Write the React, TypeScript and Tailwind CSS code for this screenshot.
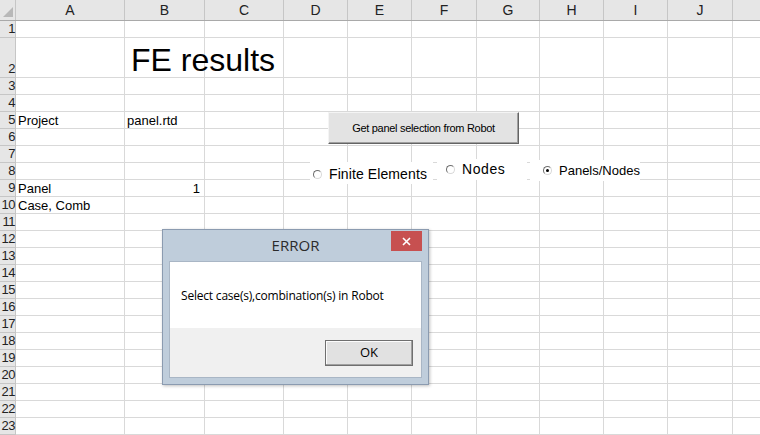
import React from 'react';

// Column widths (px) for the sheet: row-number gutter, A..J, then a partial K
const COLS = [
  { key: '', w: 16 },
  { key: 'A', w: 109 },
  { key: 'B', w: 80 },
  { key: 'C', w: 79 },
  { key: 'D', w: 64 },
  { key: 'E', w: 64 },
  { key: 'F', w: 65 },
  { key: 'G', w: 63 },
  { key: 'H', w: 64 },
  { key: 'I', w: 64 },
  { key: 'J', w: 65 },
  { key: '', w: 40 },
];

const ROW_COUNT = 23;

// Cell contents keyed by "row:col"
const CELLS: Record<string, { text: string; align?: 'right' }> = {
  '5:A': { text: 'Project' },
  '5:B': { text: 'panel.rtd' },
  '9:A': { text: 'Panel' },
  '9:B': { text: '1', align: 'right' },
  '10:A': { text: 'Case, Comb' },
};

const rowHeight = (r: number) => (r === 2 ? 40 : 17);

const CornerCell: React.FC = () => (
  <div className="relative h-full border-r border-[#c6c6c6] bg-[#e6e6e6]">
    <svg className="absolute bottom-[3px] right-[2px]" width="10" height="10" viewBox="0 0 10 10">
      <polygon points="10,0 10,10 0,10" fill="#b8b8b8" />
    </svg>
  </div>
);

const HeaderRow: React.FC = () => (
  <div className="flex h-[21px] border-b border-[#a9a9a9] bg-[#e6e6e6]">
    {COLS.map((c, i) =>
      i === 0 ? (
        <div key={i} style={{ width: c.w }} className="shrink-0">
          <CornerCell />
        </div>
      ) : (
        <div
          key={i}
          style={{ width: c.w }}
          className="flex shrink-0 items-center justify-center border-r border-[#c6c6c6] text-[14px] text-[#222]"
        >
          {c.key}
        </div>
      )
    )}
  </div>
);

const SheetRow: React.FC<{ r: number }> = ({ r }) => (
  <div className="flex" style={{ height: rowHeight(r) }}>
    {COLS.map((c, i) => {
      if (i === 0) {
        return (
          <div
            key={i}
            style={{ width: c.w }}
            className="flex shrink-0 items-end justify-end whitespace-nowrap border-b border-r border-[#c6c6c6] bg-[#e6e6e6] text-[13px] leading-[16px] tracking-[-0.5px] text-[#222]"
          >
            {r}
          </div>
        );
      }
      const cell = CELLS[`${r}:${c.key}`];
      return (
        <div
          key={i}
          style={{ width: c.w }}
          className={`flex shrink-0 items-end whitespace-nowrap border-b border-r border-[#d9d9d9] px-[2px] text-[13px] leading-[15px] text-black ${
            cell?.align === 'right' ? 'justify-end pr-[4px]' : ''
          }`}
        >
          {cell?.text}
        </div>
      );
    })}
  </div>
);

const Radio: React.FC<{ label: string; checked?: boolean; className: string; textClass?: string }> = ({
  label,
  checked,
  className,
  textClass = 'text-[14px]',
}) => (
  <div className={`absolute flex items-center bg-white ${className}`}>
    <span className="relative mr-[7px] inline-block h-[9px] w-[9px] shrink-0 rounded-full border border-t-[#6e6e6e] border-l-[#6e6e6e] border-r-[#d8d8d8] border-b-[#d8d8d8] bg-white">
      {checked && <span className="absolute left-[2px] top-[2px] h-[3px] w-[3px] rounded-full bg-black" />}
    </span>
    <span className={`text-black ${textClass}`}>{label}</span>
  </div>
);

const ErrorDialog: React.FC = () => (
  <div className="absolute left-[162px] top-[229px] flex h-[156px] w-[267px] flex-col border border-[#8b9bb0] bg-[#bfcddb] shadow-[1px_1px_3px_rgba(0,0,0,0.25)]">
    <div className="relative flex h-[31px] items-center justify-center">
      <span className="text-[15px] text-[#2b2b2b]" style={{ fontFamily: '"Open Sans", "Liberation Sans", sans-serif' }}>
        ERROR
      </span>
      <div className="absolute right-[6px] top-[1px] flex h-[20px] w-[31px] items-center justify-center bg-[#c75050]">
        <svg width="9" height="9" viewBox="0 0 9 9">
          <path d="M1 1 L8 8 M8 1 L1 8" stroke="#fff" strokeWidth="1.6" />
        </svg>
      </div>
    </div>
    <div className="mx-[6px] flex flex-1 flex-col border border-[#a9b6c5]">
      <div className="flex h-[66px] items-center bg-white pl-[11px] pt-[2px]">
        <span
          className="text-[12px] tracking-[-0.2px] text-black"
          style={{ fontFamily: '"Open Sans", "Liberation Sans", sans-serif' }}
        >
          Select case(s),combination(s) in Robot
        </span>
      </div>
      <div className="flex flex-1 items-start justify-end bg-[#f0f0f0] pr-[8px] pt-[12px]">
        <div className="flex h-[26px] w-[88px] items-center justify-center border border-[#6f6f6f] bg-[#e1e1e1] shadow-[inset_-1px_-1px_0_#a0a0a0,inset_1px_1px_0_#fcfcfc]">
          <span className="text-[13px] text-black" style={{ fontFamily: '"Open Sans", "Liberation Sans", sans-serif' }}>
            OK
          </span>
        </div>
      </div>
    </div>
    <div className="h-[6px]" />
  </div>
);

export default function App() {
  const rows = Array.from({ length: ROW_COUNT }, (_, i) => i + 1);
  return (
    <div
      className="relative h-[435px] w-[760px] overflow-hidden bg-white"
      style={{ fontFamily: '"Liberation Sans", Arial, sans-serif' }}
    >
      <HeaderRow />
      {rows.map((r) => (
        <SheetRow key={r} r={r} />
      ))}

      {/* sheet title in B2, spilling into C */}
      <div className="absolute left-[131px] top-[42px] whitespace-nowrap text-[32px] leading-[36px] text-black">
        FE results
      </div>

      {/* form controls placed on the sheet */}
      <div className="absolute left-[328px] top-[112px] flex h-[32px] w-[191px] items-center justify-center border border-t-[#f4f4f4] border-l-[#f4f4f4] border-b-[#646464] border-r-[#646464] bg-[#e3e3e3] shadow-[inset_-1px_-1px_0_#a0a0a0]">
        <span className="text-[11px] tracking-[-0.3px] text-black">Get panel selection from Robot</span>
      </div>

      <Radio label="Finite Elements" className="left-[310px] top-[162px] h-[22px] w-[123px] pl-[3px] pt-[2px]" textClass="text-[14px] tracking-[0.1px]" />
      <Radio label="Nodes" className="left-[437px] top-[159px] h-[21px] w-[90px] pl-[9px]" textClass="text-[14px] tracking-[0.6px]" />
      <Radio label="Panels/Nodes" checked className="left-[530px] top-[160px] h-[21px] w-[110px] pl-[13px]" textClass="text-[13px]" />

      <ErrorDialog />
    </div>
  );
}
